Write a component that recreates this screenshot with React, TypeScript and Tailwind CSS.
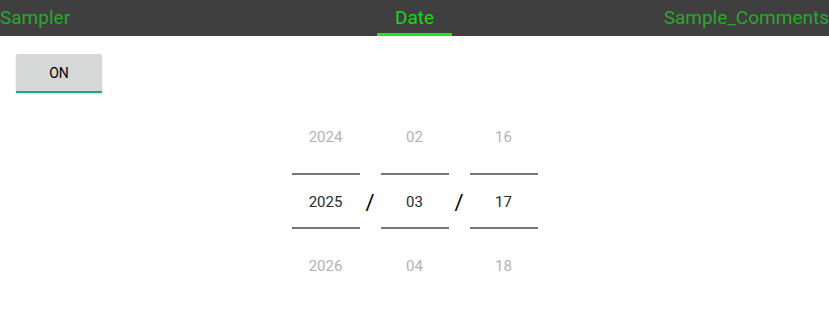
import { useState } from 'react'

const columns = [
    { prev: '2024', value: '2025', next: '2026' },
    { prev: '02', value: '03', next: '04' },
    { prev: '16', value: '17', next: '18' }
]

function PickerColumn({ prev, value, next }: { prev: string; value: string; next: string }) {
    return (
        <div className="flex flex-col w-[68px]">
            <div className="h-[64px] flex items-center justify-center text-[15px] text-[#b3b3b3]">
                {prev}
            </div>
            <div className="h-[4px]"></div>
            <div className="h-[2px] bg-[#777777]"></div>
            <div className="h-[52px] flex items-center justify-center text-[15px] text-[#2a2a2a] pt-[2px]">
                {value}
            </div>
            <div className="h-[2px] bg-[#777777]"></div>
            <div className="h-[5px]"></div>
            <div className="h-[64px] flex items-center justify-center text-[15px] text-[#b3b3b3]">
                {next}
            </div>
        </div>
    )
}

function Slash() {
    return (
        <div className="w-[21px] flex items-center justify-center pt-[2px]">
            <span className="text-[22px] text-black font-normal leading-none">/</span>
        </div>
    )
}

export default function App() {
    const [on, setOn] = useState(true)

    return (
        <div className="w-[829px] h-[309px] bg-white font-['Roboto',sans-serif] overflow-hidden">
            <div className="h-[36px] bg-[#3f3f3f] grid grid-cols-[1fr_75px_1fr]">
                <div className="flex items-center text-[19px] text-[#2ea52e] leading-none pb-[1px]">
                    Sampler
                </div>
                <div className="flex flex-col items-center">
                    <div className="flex-1 flex items-center text-[19px] text-[#22d022] leading-none pt-[2px]">
                        Date
                    </div>
                    <div className="h-[3px] w-full bg-[#18ec18]"></div>
                </div>
                <div className="flex items-center justify-end text-[19px] text-[#2ea52e] leading-none pb-[1px]">
                    Sample_Comments
                </div>
            </div>

            <div className="pl-4 pt-[18px]">
                <button
                    onClick={() => setOn(!on)}
                    className="w-[86px] h-[39px] bg-[#d6d7d7] rounded-t-[2px] shadow-[0_1px_2px_rgba(0,0,0,0.15)] border-b-2 border-[#26a192] flex items-center justify-center text-[14px] font-normal text-black pt-[2px]"
                >
                    {on ? 'ON' : 'OFF'}
                </button>
            </div>

            <div className="flex justify-center mt-[12px]">
                <PickerColumn {...columns[0]} />
                <Slash />
                <PickerColumn {...columns[1]} />
                <Slash />
                <PickerColumn {...columns[2]} />
            </div>
        </div>
    )
}
